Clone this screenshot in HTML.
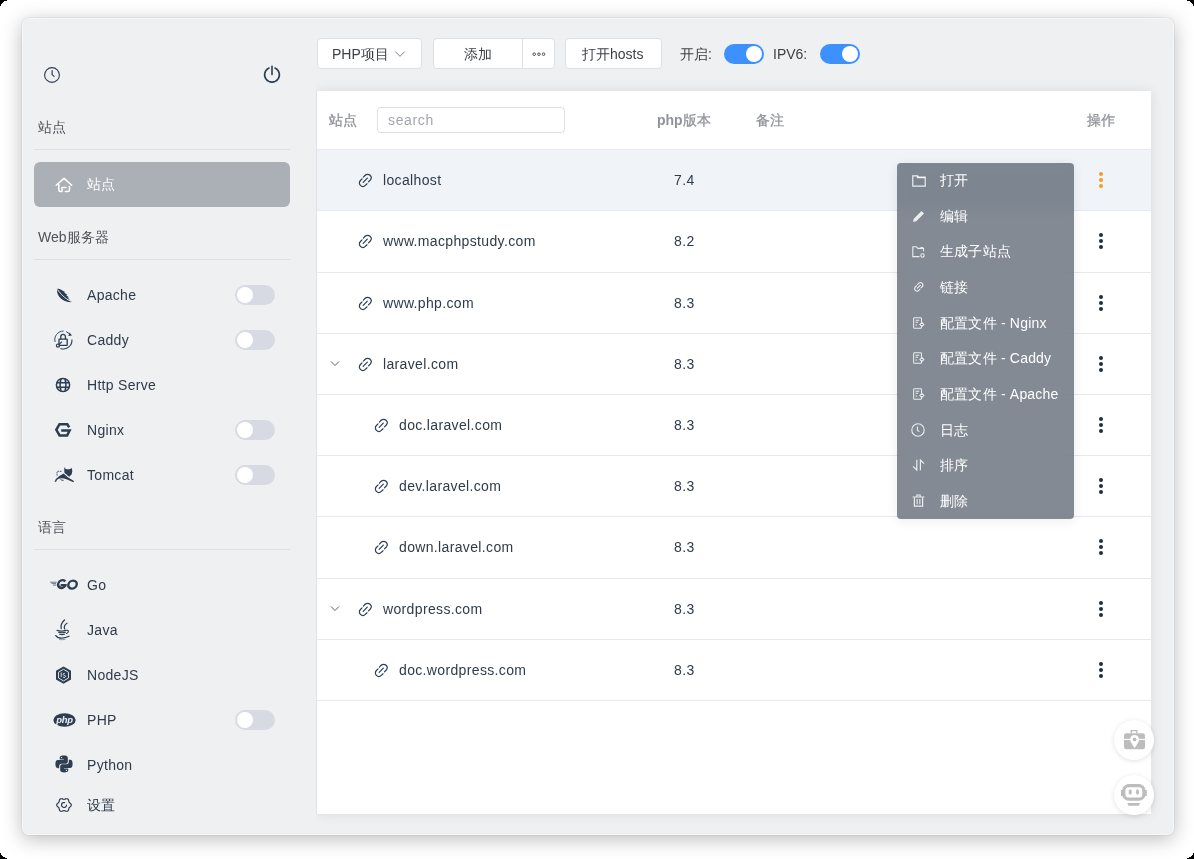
<!DOCTYPE html>
<html><head><meta charset="utf-8"><style>
*{box-sizing:border-box;margin:0;padding:0}
html,body{width:1194px;height:859px;overflow:hidden;background:#fff;font-family:"Liberation Sans",sans-serif;position:relative}
.a{position:absolute}
#root{position:absolute;left:0;top:0;width:1194px;height:859px;will-change:transform}
#bg{position:absolute;left:0;top:0;width:1194px;height:859px;background:#fff;border-radius:11px}
#win{position:absolute;left:22px;top:18px;width:1152px;height:817px;background:#eff0f2;border-radius:6.5px;
 box-shadow:0 4px 20px rgba(0,0,0,.27),0 0 1.5px rgba(0,0,0,.22),inset 0 0 0 1px rgba(255,255,255,.4)}
.t{position:absolute;white-space:nowrap;font-size:14px;line-height:17px;color:#2f3b4a}
.hd{color:#4f5259}
.it{color:#2f3b4a;letter-spacing:.3px}
.th{color:#909399}
.b{font-weight:bold}
.nm{color:#2f3b4a;letter-spacing:.35px}
.mt{color:#fff;letter-spacing:.2px}
.tog{position:absolute;width:40px;height:20px;border-radius:10px;background:#d7dae2}
.tog::after{content:"";position:absolute;left:2px;top:2px;width:16px;height:16px;border-radius:50%;background:#fff}
.tog.on{background:#3c91fe}
.tog.on::after{left:22px}
.btn{position:absolute;background:#fff;border:1px solid #dcdfe6;border-radius:4px}
#card{position:absolute;left:316px;top:91px;width:835px;height:723px;background:#fff;border-left:1px solid #dfe2e9;box-shadow:0 0 12px rgba(0,0,0,.09)}
#cardclip{position:absolute;left:296px;top:70px;width:20px;height:760px;background:#eff0f2}
.hl{position:absolute;left:317px;width:834px;height:1px;background:#e6e9f0}
#menu{position:absolute;left:897px;top:163px;width:177px;height:356px;border-radius:4px;background:rgba(55,66,80,.62);backdrop-filter:blur(6px);-webkit-backdrop-filter:blur(6px);box-shadow:0 2px 12px rgba(0,0,0,.08)}
.fab{position:absolute;width:40px;height:40px;border-radius:50%;background:#fff;box-shadow:0 1px 5px rgba(0,0,0,.12)}
</style></head><body>
<div id="root"><div id="win"></div>
<svg class="a" style="left:44px;top:67px" width="16" height="16" viewBox="0 0 16 16" fill="none" stroke="#2c3e50" stroke-width="1.1"><circle cx="8" cy="8" r="7.4"/><path d="M8.1 3.7V7.6L10.1 9.4" stroke-linecap="round" stroke-width="1.2"/></svg>
<svg class="a" style="left:262px;top:64px" width="20" height="20" viewBox="0 0 20 20" fill="none" stroke="#2c3e50" stroke-width="1.6" stroke-linecap="round"><path d="M6.99 3.99A7.4 7.4 0 1 0 13.01 3.99"/><path d="M10 2.4V10.6"/></svg>
<div class="t hd" style="left:38px;top:119px;">站点</div>
<div class="a" style="left:34px;top:149px;width:256px;height:1px;background:#dcdfe6"></div>
<div class="a" style="left:34px;top:162px;width:256px;height:45px;border-radius:6px;background:#abafb6"></div>
<svg class="a" style="left:54px;top:176px" width="20" height="18" viewBox="0 0 20 18" fill="none" stroke="#fff" stroke-width="1.5" stroke-linecap="round" stroke-linejoin="round"><path d="M2.2 9.3L10.1 2.4L17.7 9.3"/><path d="M4.8 8.2V14Q4.8 15.5 6.3 15.5H8V11.5H12"/><path d="M15.5 10.5V14Q15.5 15.5 14 15.5H11.3"/></svg>
<div class="t" style="left:87px;top:176px;color:#fff">站点</div>
<div class="t hd" style="left:38px;top:229px;">Web服务器</div>
<div class="a" style="left:34px;top:259px;width:256px;height:1px;background:#dcdfe6"></div>
<div class="a" style="left:55px;top:286px;line-height:0"><svg width="18" height="18" viewBox="0 0 18 18"><path fill="#2c3e50" d="M1.6 1.2c.3 1 .5 1.6.9 2.1C1.6 5.3 2.2 8.5 4.6 11.3c2.6 3 6.4 4.7 10.7 4.9l1.5-.6-4.1-2 2.3.2-2.6-2.3 1.6-.1-2.9-2.3 1.2-.3-3.2-2.4 1-.5L5.6 3.5C4.6 2.9 3.5 2.6 2.5 2.9 2.1 2.4 1.9 1.8 1.6 1.2z"/><path d="M2.8 3.8c2.6 4 6.8 8.6 13.6 11.8" stroke="#eff0f2" stroke-width=".9" fill="none"/></svg></div>
<div class="t it" style="left:87px;top:287px;">Apache</div>
<div class="tog" style="left:235px;top:285px"></div>
<div class="a" style="left:54px;top:330px;line-height:0"><svg width="20" height="20" viewBox="0 0 20 20" fill="none" stroke="#2c3e50" stroke-width="1.1"><path d="M1.1 12A8.6 8.6 0 0 1 9.6 1.1" stroke-width=".9"/><path d="M12.2 1.6l4.4 2.9" stroke-width="1"/><path d="M15.4 2.6l2.6 2.8-3.6.6z" fill="#2c3e50" stroke="none"/><path d="M17.9 9.5A8.6 8.6 0 0 1 6.4 18.4"/><rect x="5" y="9.2" width="8.2" height="6.2" rx=".4" stroke-width="1.3"/><path d="M6.8 9.2V6.6a2.3 2.3 0 0 1 4.6 0v2.6" stroke-width="1.3"/><circle cx="4" cy="15.6" r="1.6" stroke-width="1.2"/><path d="M5.2 14.4l2.8-2.8" stroke-width="1.1"/></svg></div>
<div class="t it" style="left:87px;top:332px;">Caddy</div>
<div class="tog" style="left:235px;top:330px"></div>
<div class="a" style="left:55px;top:377px;line-height:0"><svg width="16" height="16" viewBox="0 0 16 16" fill="none" stroke="#2c3e50" stroke-width="1.5"><circle cx="8" cy="8" r="6.6"/><path d="M1.5 5.7h13M1.5 10.3h13M6 1.6c-1.2 4-1.2 8.8 0 12.8M10 1.6c1.2 4 1.2 8.8 0 12.8"/></svg></div>
<div class="t it" style="left:87px;top:377px;">Http Serve</div>
<div class="a" style="left:54px;top:421px;line-height:0"><svg width="18" height="18" viewBox="0 0 18 18" fill="none" stroke="#2c3e50" stroke-width="2.5" stroke-linejoin="miter"><path d="M15.2 6.2L13.3 3.25H5.5L2.3 8.8L5.6 14.45H13.1L15.6 9.5H7.2"/></svg></div>
<div class="t it" style="left:87px;top:422px;">Nginx</div>
<div class="tog" style="left:235px;top:420px"></div>
<div class="a" style="left:53px;top:465px;line-height:0"><svg width="22" height="19" viewBox="0 0 22 19"><path fill="#2c3e50" d="M11.2 2.2L12.9 4Q15 4.6 17.2 3.9L18.8 3.1Q20 6.5 18.7 9.3L16 11.9L11.4 8.2Z"/><path fill="#2c3e50" d="M1.5 16.7Q2.5 13.5 6 11.2L10.5 8.6L15.2 12.4L20.9 16.1Q21 17.4 19.8 17.1L13.5 14.2Q9 12.6 5.5 13.8Q3.6 15 3.1 16.8Z"/><path d="M10.6 7.6L16.8 12.8" stroke="#eff0f2" stroke-width=".8"/><path d="M4 10.6V7.2Q4.2 6.2 5.5 6.3H9" stroke="#2c3e50" stroke-width=".9" fill="none" stroke-dasharray="1.5 .7"/><path d="M7.5 14.6Q9 15.5 10.6 15.3" stroke="#2c3e50" stroke-width=".9" fill="none"/></svg></div>
<div class="t it" style="left:87px;top:467px;">Tomcat</div>
<div class="tog" style="left:235px;top:465px"></div>
<div class="t hd" style="left:38px;top:519px;">语言</div>
<div class="a" style="left:34px;top:549px;width:256px;height:1px;background:#dcdfe6"></div>
<div class="a" style="left:48px;top:577px;line-height:0"><svg width="31" height="15" viewBox="0 0 31 15"><g fill="none" stroke="#2c3e50"><path d="M2 5.2h6.5M3.5 6.6h4.6M5 8.1h3.4" stroke-width=".9" opacity=".75"/><g transform="skewX(-8) translate(1 0)" stroke-width="2.4"><path d="M16.9 4.4A3.9 3.9 0 1 0 17.6 8.6"/><path d="M12.8 8.1h6"/><ellipse cx="24.6" cy="7.6" rx="4.2" ry="4"/></g></g></svg></div>
<div class="t it" style="left:87px;top:577px;">Go</div>
<div class="a" style="left:54px;top:619px;line-height:0"><svg width="17" height="22" viewBox="0 0 17 22" fill="none" stroke="#2c3e50" stroke-linecap="round"><path d="M10.5 1C8.3 3.3 6 5.2 7.2 9.5" stroke-width="1.3"/><path d="M13 4.2C11 5.5 9.6 7.2 10.6 10" stroke-width="1.2"/><path d="M3 11.4Q7.5 12.8 12 11.4M4.6 13.3Q7.8 14.3 11.4 13.3M5.6 15.3Q8 16 10.5 15.3" stroke-width="1.1"/><path d="M12.6 11.2C14.9 11 15 13.6 12.4 14.5" stroke-width="1.1"/><path d="M1.8 16.6Q3.8 19.4 8 19.1Q12 19 15 17.3" stroke-width="1.3"/><path d="M5.5 20.6Q8.2 21 11 20.4" stroke-width=".8" opacity=".6"/></svg></div>
<div class="t it" style="left:87px;top:622px;">Java</div>
<div class="a" style="left:55px;top:666px;line-height:0"><svg width="17" height="18" viewBox="0 0 17 18"><path fill="#2c3e50" d="M8.5.5l7.5 4.3v8.6l-7.5 4.3L1 13.4V4.8z"/><path d="M8.5 3.3l5 2.9v5.8l-5 2.9-5-2.9V6.2z" fill="none" stroke="#eff0f2" stroke-width=".9"/><path d="M6.2 6.5v4.6M8 11c.6.5 1.4.6 2 .3.9-.5.7-1.6-.3-1.8-1-.2-1.7-.6-1.5-1.4.2-.8 1.3-.9 1.8-.4" fill="none" stroke="#eff0f2" stroke-width=".9"/></svg></div>
<div class="t it" style="left:87px;top:667px;">NodeJS</div>
<div class="a" style="left:53px;top:713px;line-height:0"><svg width="23" height="14" viewBox="0 0 23 14"><ellipse cx="11.5" cy="7" rx="11.2" ry="6.8" fill="#2c3e50"/><text x="3.2" y="10" font-family="Liberation Sans" font-weight="bold" font-style="italic" font-size="9.5" fill="#eff0f2" letter-spacing="-.3">php</text></svg></div>
<div class="t it" style="left:87px;top:712px;">PHP</div>
<div class="tog" style="left:235px;top:710px"></div>
<div class="a" style="left:55px;top:755px;line-height:0"><svg width="18" height="18" viewBox="0 0 18 18"><path fill="#2c3e50" d="M8.8.6c-4.3 0-4 1.9-4 1.9v2h4.1v.6H3.1S.4 4.8.4 9.1s2.4 4.1 2.4 4.1h1.4v-2s-.1-2.4 2.3-2.4h4s2.3 0 2.3-2.2V2.9S13.2.6 8.8.6zM6.6 1.9a.7.7 0 1 1 0 1.4.7.7 0 0 1 0-1.4z"/><path fill="#2c3e50" d="M9.2 17.4c4.3 0 4-1.9 4-1.9v-2H9.1v-.6h5.8s2.7.3 2.7-4-2.4-4.1-2.4-4.1h-1.4v2s.1 2.4-2.3 2.4h-4s-2.3 0-2.3 2.2v3.7s-.4 2.3 4 2.3zm2.2-1.3a.7.7 0 1 1 0-1.4.7.7 0 0 1 0 1.4z"/></svg></div>
<div class="t it" style="left:87px;top:757px;">Python</div>
<div class="a" style="left:55px;top:797px;line-height:0"><svg width="18" height="16" viewBox="0 0 18 16" fill="none" stroke="#2c3e50" stroke-width="1.2" stroke-linejoin="round" stroke-linecap="round"><path d="M16.30 8.00 L16.18 8.60 L15.84 9.16 L15.38 9.64 L14.87 10.05 L14.43 10.43 L14.11 10.83 L13.91 11.30 L13.79 11.86 L13.67 12.48 L13.47 13.11 L13.13 13.67 L12.65 14.07 L12.05 14.27 L11.38 14.27 L10.71 14.12 L10.09 13.91 L9.52 13.73 L9.00 13.66 L8.48 13.73 L7.91 13.91 L7.29 14.12 L6.62 14.27 L5.95 14.27 L5.35 14.07 L4.87 13.67 L4.53 13.11 L4.33 12.48 L4.21 11.86 L4.09 11.30 L3.89 10.83 L3.57 10.43 L3.13 10.05 L2.62 9.64 L2.16 9.16 L1.82 8.60 L1.70 8.00 L1.82 7.40 L2.16 6.84 L2.62 6.36 L3.13 5.95 L3.57 5.57 L3.89 5.17 L4.09 4.70 L4.21 4.14 L4.33 3.52 L4.53 2.89 L4.87 2.33 L5.35 1.93 L5.95 1.73 L6.62 1.73 L7.29 1.88 L7.91 2.09 L8.48 2.27 L9.00 2.34 L9.52 2.27 L10.09 2.09 L10.71 1.88 L11.38 1.73 L12.05 1.73 L12.65 1.93 L13.13 2.33 L13.47 2.89 L13.67 3.52 L13.79 4.14 L13.91 4.70 L14.11 5.17 L14.43 5.57 L14.87 5.95 L15.38 6.36 L15.84 6.84 L16.18 7.40 L16.30 8.00Z"/><path d="M11.49 8.22A2.5 2.5 0 1 1 9.65 5.59"/></svg></div>
<div class="t it" style="left:87px;top:797px;">设置</div>
<div class="btn" style="left:317px;top:38px;width:105px;height:31px"></div>
<div class="t" style="left:332px;top:46px;color:#3c3f44">PHP项目</div>
<svg class="a" style="left:394px;top:50px" width="12" height="8" viewBox="0 0 12 8" fill="none" stroke="#7a7d84" stroke-width="1"><path d="M1.3 1.6l4.7 4.7 4.7-4.7"/></svg>
<div class="btn" style="left:433px;top:38px;width:90px;height:31px;border-radius:4px 0 0 4px"></div>
<div class="btn" style="left:522px;top:38px;width:33px;height:31px;border-radius:0 4px 4px 0"></div>
<div class="t" style="left:464px;top:46px;color:#3c3f44">添加</div>
<svg class="a" style="left:531px;top:51px" width="16" height="6" viewBox="0 0 16 6" fill="none" stroke="#3c3f44" stroke-width=".9"><circle cx="3.2" cy="3.2" r="1.3"/><circle cx="7.9" cy="3.2" r="1.3"/><circle cx="12.6" cy="3.2" r="1.3"/></svg>
<div class="btn" style="left:565px;top:38px;width:97px;height:31px"></div>
<div class="t" style="left:582px;top:46px;color:#3c3f44">打开hosts</div>
<div class="t" style="left:680px;top:46px;color:#3c3f44">开启:</div>
<div class="tog on" style="left:724px;top:44px"></div>
<div class="t" style="left:773px;top:46px;color:#3c3f44">IPV6:</div>
<div class="tog on" style="left:820px;top:44px"></div>
<div id="card"></div><div id="cardclip"></div>
<div class="t th" style="left:329px;top:112px;font-weight:400;-webkit-text-stroke:.3px #909399">站点</div>
<div class="a" style="left:377px;top:107px;width:188px;height:26px;border:1px solid #dcdfe6;border-radius:4px;background:#fff"></div>
<div class="t" style="left:388px;top:112px;color:#a3a6ad;letter-spacing:.65px">search</div>
<div class="t th" style="left:657px;top:112px;"><b>php</b><span style="font-weight:400;-webkit-text-stroke:.3px #909399">版本</span></div>
<div class="t th" style="left:756px;top:112px;font-weight:400;-webkit-text-stroke:.3px #909399">备注</div>
<div class="t th" style="left:1087px;top:112px;font-weight:400;-webkit-text-stroke:.3px #909399">操作</div>
<div class="a" style="left:317px;top:150px;width:834px;height:60px;background:#f0f4f8"></div>
<div class="a hl" style="top:149px"></div>
<div class="a" style="left:357.4px;top:171.9px;line-height:0"><svg width="16.5" height="16.5" viewBox="0 0 15 15" fill="none" stroke="#2c3e50" stroke-width="1.1" stroke-linecap="round"><path d="M5.8 4.6L7.4 3A3.18 3.18 0 0 1 11.9 7.5L10.4 9"/><path d="M4.6 6.2L3.1 7.7A3.18 3.18 0 0 0 7.6 12.2L9.1 10.7"/><path d="M5.6 9.4L9.4 5.6"/></svg></div>
<div class="t nm" style="left:383px;top:171.5px;">localhost</div>
<div class="t nm" style="left:674px;top:171.5px;">7.4</div>
<svg class="a" style="left:1098px;top:171px" width="6" height="18" viewBox="0 0 6 18" fill="#f59a23"><circle cx="3" cy="3" r="2"/><circle cx="3" cy="9" r="2"/><circle cx="3" cy="15" r="2"/></svg>
<div class="a hl" style="top:210px"></div>
<div class="a" style="left:357.4px;top:233.4px;line-height:0"><svg width="16.5" height="16.5" viewBox="0 0 15 15" fill="none" stroke="#2c3e50" stroke-width="1.1" stroke-linecap="round"><path d="M5.8 4.6L7.4 3A3.18 3.18 0 0 1 11.9 7.5L10.4 9"/><path d="M4.6 6.2L3.1 7.7A3.18 3.18 0 0 0 7.6 12.2L9.1 10.7"/><path d="M5.6 9.4L9.4 5.6"/></svg></div>
<div class="t nm" style="left:383px;top:233.0px;">www.macphpstudy.com</div>
<div class="t nm" style="left:674px;top:233.0px;">8.2</div>
<svg class="a" style="left:1098px;top:232px" width="6" height="18" viewBox="0 0 6 18" fill="#1f2d3d"><circle cx="3" cy="3" r="2"/><circle cx="3" cy="9" r="2"/><circle cx="3" cy="15" r="2"/></svg>
<div class="a hl" style="top:272px"></div>
<div class="a" style="left:357.4px;top:294.9px;line-height:0"><svg width="16.5" height="16.5" viewBox="0 0 15 15" fill="none" stroke="#2c3e50" stroke-width="1.1" stroke-linecap="round"><path d="M5.8 4.6L7.4 3A3.18 3.18 0 0 1 11.9 7.5L10.4 9"/><path d="M4.6 6.2L3.1 7.7A3.18 3.18 0 0 0 7.6 12.2L9.1 10.7"/><path d="M5.6 9.4L9.4 5.6"/></svg></div>
<div class="t nm" style="left:383px;top:294.5px;">www.php.com</div>
<div class="t nm" style="left:674px;top:294.5px;">8.3</div>
<svg class="a" style="left:1098px;top:294px" width="6" height="18" viewBox="0 0 6 18" fill="#1f2d3d"><circle cx="3" cy="3" r="2"/><circle cx="3" cy="9" r="2"/><circle cx="3" cy="15" r="2"/></svg>
<div class="a hl" style="top:333px"></div>
<svg class="a" style="left:330px;top:360.0px" width="10" height="7" viewBox="0 0 10 7" fill="none" stroke="#606266" stroke-width="1"><path d="M1 1.5l4 4 4-4"/></svg>
<div class="a" style="left:357.4px;top:355.9px;line-height:0"><svg width="16.5" height="16.5" viewBox="0 0 15 15" fill="none" stroke="#2c3e50" stroke-width="1.1" stroke-linecap="round"><path d="M5.8 4.6L7.4 3A3.18 3.18 0 0 1 11.9 7.5L10.4 9"/><path d="M4.6 6.2L3.1 7.7A3.18 3.18 0 0 0 7.6 12.2L9.1 10.7"/><path d="M5.6 9.4L9.4 5.6"/></svg></div>
<div class="t nm" style="left:383px;top:355.5px;">laravel.com</div>
<div class="t nm" style="left:674px;top:355.5px;">8.3</div>
<svg class="a" style="left:1098px;top:355px" width="6" height="18" viewBox="0 0 6 18" fill="#1f2d3d"><circle cx="3" cy="3" r="2"/><circle cx="3" cy="9" r="2"/><circle cx="3" cy="15" r="2"/></svg>
<div class="a hl" style="top:394px"></div>
<div class="a" style="left:373.4px;top:416.9px;line-height:0"><svg width="16.5" height="16.5" viewBox="0 0 15 15" fill="none" stroke="#2c3e50" stroke-width="1.1" stroke-linecap="round"><path d="M5.8 4.6L7.4 3A3.18 3.18 0 0 1 11.9 7.5L10.4 9"/><path d="M4.6 6.2L3.1 7.7A3.18 3.18 0 0 0 7.6 12.2L9.1 10.7"/><path d="M5.6 9.4L9.4 5.6"/></svg></div>
<div class="t nm" style="left:399px;top:416.5px;">doc.laravel.com</div>
<div class="t nm" style="left:674px;top:416.5px;">8.3</div>
<svg class="a" style="left:1098px;top:416px" width="6" height="18" viewBox="0 0 6 18" fill="#1f2d3d"><circle cx="3" cy="3" r="2"/><circle cx="3" cy="9" r="2"/><circle cx="3" cy="15" r="2"/></svg>
<div class="a hl" style="top:455px"></div>
<div class="a" style="left:373.4px;top:477.9px;line-height:0"><svg width="16.5" height="16.5" viewBox="0 0 15 15" fill="none" stroke="#2c3e50" stroke-width="1.1" stroke-linecap="round"><path d="M5.8 4.6L7.4 3A3.18 3.18 0 0 1 11.9 7.5L10.4 9"/><path d="M4.6 6.2L3.1 7.7A3.18 3.18 0 0 0 7.6 12.2L9.1 10.7"/><path d="M5.6 9.4L9.4 5.6"/></svg></div>
<div class="t nm" style="left:399px;top:477.5px;">dev.laravel.com</div>
<div class="t nm" style="left:674px;top:477.5px;">8.3</div>
<svg class="a" style="left:1098px;top:477px" width="6" height="18" viewBox="0 0 6 18" fill="#1f2d3d"><circle cx="3" cy="3" r="2"/><circle cx="3" cy="9" r="2"/><circle cx="3" cy="15" r="2"/></svg>
<div class="a hl" style="top:516px"></div>
<div class="a" style="left:373.4px;top:539.4px;line-height:0"><svg width="16.5" height="16.5" viewBox="0 0 15 15" fill="none" stroke="#2c3e50" stroke-width="1.1" stroke-linecap="round"><path d="M5.8 4.6L7.4 3A3.18 3.18 0 0 1 11.9 7.5L10.4 9"/><path d="M4.6 6.2L3.1 7.7A3.18 3.18 0 0 0 7.6 12.2L9.1 10.7"/><path d="M5.6 9.4L9.4 5.6"/></svg></div>
<div class="t nm" style="left:399px;top:539.0px;">down.laravel.com</div>
<div class="t nm" style="left:674px;top:539.0px;">8.3</div>
<svg class="a" style="left:1098px;top:538px" width="6" height="18" viewBox="0 0 6 18" fill="#1f2d3d"><circle cx="3" cy="3" r="2"/><circle cx="3" cy="9" r="2"/><circle cx="3" cy="15" r="2"/></svg>
<div class="a hl" style="top:578px"></div>
<svg class="a" style="left:330px;top:605.0px" width="10" height="7" viewBox="0 0 10 7" fill="none" stroke="#606266" stroke-width="1"><path d="M1 1.5l4 4 4-4"/></svg>
<div class="a" style="left:357.4px;top:600.9px;line-height:0"><svg width="16.5" height="16.5" viewBox="0 0 15 15" fill="none" stroke="#2c3e50" stroke-width="1.1" stroke-linecap="round"><path d="M5.8 4.6L7.4 3A3.18 3.18 0 0 1 11.9 7.5L10.4 9"/><path d="M4.6 6.2L3.1 7.7A3.18 3.18 0 0 0 7.6 12.2L9.1 10.7"/><path d="M5.6 9.4L9.4 5.6"/></svg></div>
<div class="t nm" style="left:383px;top:600.5px;">wordpress.com</div>
<div class="t nm" style="left:674px;top:600.5px;">8.3</div>
<svg class="a" style="left:1098px;top:600px" width="6" height="18" viewBox="0 0 6 18" fill="#1f2d3d"><circle cx="3" cy="3" r="2"/><circle cx="3" cy="9" r="2"/><circle cx="3" cy="15" r="2"/></svg>
<div class="a hl" style="top:639px"></div>
<div class="a" style="left:373.4px;top:661.9px;line-height:0"><svg width="16.5" height="16.5" viewBox="0 0 15 15" fill="none" stroke="#2c3e50" stroke-width="1.1" stroke-linecap="round"><path d="M5.8 4.6L7.4 3A3.18 3.18 0 0 1 11.9 7.5L10.4 9"/><path d="M4.6 6.2L3.1 7.7A3.18 3.18 0 0 0 7.6 12.2L9.1 10.7"/><path d="M5.6 9.4L9.4 5.6"/></svg></div>
<div class="t nm" style="left:399px;top:661.5px;">doc.wordpress.com</div>
<div class="t nm" style="left:674px;top:661.5px;">8.3</div>
<svg class="a" style="left:1098px;top:661px" width="6" height="18" viewBox="0 0 6 18" fill="#1f2d3d"><circle cx="3" cy="3" r="2"/><circle cx="3" cy="9" r="2"/><circle cx="3" cy="15" r="2"/></svg>
<div class="a hl" style="top:700px"></div>
<div class="fab" style="left:1114px;top:720px"></div>
<svg class="a" style="left:1123px;top:729px" width="23" height="22" viewBox="0 0 23 22"><path fill="#bdbdbd" d="M7.5 1h7v3.4h-1.4V2.2H8.9v2.2H7.5z"/><rect x="1" y="4.2" width="21" height="16.1" rx="2.2" fill="#bdbdbd"/><path fill="#fff" d="M1 9.9h21v1.1H1z"/><path fill="#fff" d="M11.6 5.9a4.5 4.5 0 0 1 4.5 4.5c0 2.6-4.5 8.6-4.5 8.6s-4.5-6-4.5-8.6a4.5 4.5 0 0 1 4.5-4.5z"/><circle cx="11.6" cy="10.4" r="1.9" fill="#bdbdbd"/></svg>
<div class="fab" style="left:1114px;top:775px"></div>
<svg class="a" style="left:1120px;top:782px" width="28" height="26" viewBox="0 0 28 26"><rect x="3.8" y="3.6" width="20.1" height="13.6" rx="5" fill="none" stroke="#bdbdbd" stroke-width="3.2"/><rect x="1" y="8" width="2.6" height="6" fill="#bdbdbd"/><rect x="24.2" y="8" width="2.6" height="6" fill="#bdbdbd"/><ellipse cx="10.2" cy="10" rx="1.6" ry="2.75" fill="#bdbdbd"/><ellipse cx="17.5" cy="10" rx="1.6" ry="2.75" fill="#bdbdbd"/><path fill="#bdbdbd" d="M7.3 21H20L18.8 23.8H8.5Z"/></svg>
<div id="menu"></div>
<div class="a" style="left:912px;top:175px;line-height:0"><svg width="14" height="12" viewBox="0 0 14 12" fill="none" stroke="rgba(255,255,255,.85)" stroke-width="1.2"><path d="M.8.8h4.6l1.4 1.4h6.4v9H.8z"/><path d="M5.4.8v1.8h7.8"/></svg></div>
<div class="t mt" style="left:940px;top:171.5px;">打开</div>
<div class="a" style="left:912px;top:210px;line-height:0"><svg width="13" height="13" viewBox="0 0 13 13"><path d="M9.6 1l2.4 2.4-7.8 7.8-3.2.8.8-3.2z" fill="rgba(255,255,255,.85)"/></svg></div>
<div class="t mt" style="left:940px;top:207.5px;">编辑</div>
<div class="a" style="left:912px;top:246px;line-height:0"><svg width="14" height="13" viewBox="0 0 14 13" fill="none" stroke="rgba(255,255,255,.85)" stroke-width="1.1"><path d="M7.5 10.6H.8V.8h3.6l1.5 1.6h5.6v2.8M8.5 1.6h2.6"/><circle cx="10.5" cy="9.5" r="1.7"/></svg></div>
<div class="t mt" style="left:940px;top:243.0px;">生成子站点</div>
<div class="a" style="left:913px;top:281px;line-height:0"><svg width="11.5" height="11.5" viewBox="0 0 15 15" fill="none" stroke="rgba(255,255,255,.85)" stroke-width="1.4" stroke-linecap="round"><path d="M5.8 4.6L7.4 3A3.18 3.18 0 0 1 11.9 7.5L10.4 9"/><path d="M4.6 6.2L3.1 7.7A3.18 3.18 0 0 0 7.6 12.2L9.1 10.7"/><path d="M5.6 9.4L9.4 5.6"/></svg></div>
<div class="t mt" style="left:940px;top:278.5px;">链接</div>
<div class="a" style="left:913px;top:317px;line-height:0"><svg width="12" height="12" viewBox="0 0 13 13" fill="none" stroke="rgba(255,255,255,.85)" stroke-width="1.1"><path d="M9.2 5.5V1.6a.9.9 0 0 0-.9-.9H1.6a.9.9 0 0 0-.9.9v9.8a.9.9 0 0 0 .9.9h6.7a.9.9 0 0 0 .9-.9V10"/><path d="M2.8 3.6h4M2.8 5.8h2.6M2.8 8.6h1.6"/><path d="M9.6 5.8l2.2 2.2-2.2 2.2-2.2-2.2z"/></svg></div>
<div class="t mt" style="left:940px;top:314.5px;">配置文件 - Nginx</div>
<div class="a" style="left:913px;top:352px;line-height:0"><svg width="12" height="12" viewBox="0 0 13 13" fill="none" stroke="rgba(255,255,255,.85)" stroke-width="1.1"><path d="M9.2 5.5V1.6a.9.9 0 0 0-.9-.9H1.6a.9.9 0 0 0-.9.9v9.8a.9.9 0 0 0 .9.9h6.7a.9.9 0 0 0 .9-.9V10"/><path d="M2.8 3.6h4M2.8 5.8h2.6M2.8 8.6h1.6"/><path d="M9.6 5.8l2.2 2.2-2.2 2.2-2.2-2.2z"/></svg></div>
<div class="t mt" style="left:940px;top:350.0px;">配置文件 - Caddy</div>
<div class="a" style="left:913px;top:388px;line-height:0"><svg width="12" height="12" viewBox="0 0 13 13" fill="none" stroke="rgba(255,255,255,.85)" stroke-width="1.1"><path d="M9.2 5.5V1.6a.9.9 0 0 0-.9-.9H1.6a.9.9 0 0 0-.9.9v9.8a.9.9 0 0 0 .9.9h6.7a.9.9 0 0 0 .9-.9V10"/><path d="M2.8 3.6h4M2.8 5.8h2.6M2.8 8.6h1.6"/><path d="M9.6 5.8l2.2 2.2-2.2 2.2-2.2-2.2z"/></svg></div>
<div class="t mt" style="left:940px;top:385.5px;">配置文件 - Apache</div>
<div class="a" style="left:911px;top:423px;line-height:0"><svg width="14" height="14" viewBox="0 0 14 14" fill="none" stroke="rgba(255,255,255,.85)" stroke-width="1.1"><circle cx="7" cy="7" r="6.2"/><path d="M6.4 3.6v3.6l2 1.4"/></svg></div>
<div class="t mt" style="left:940px;top:421.5px;">日志</div>
<div class="a" style="left:912px;top:459px;line-height:0"><svg width="13" height="12" viewBox="0 0 13 12" fill="none" stroke="rgba(255,255,255,.85)" stroke-width="1.2"><path d="M4.8 .8v10.2L1 7.4M8.4 11.2V1L12 4.6"/></svg></div>
<div class="t mt" style="left:940px;top:456.5px;">排序</div>
<div class="a" style="left:912px;top:494px;line-height:0"><svg width="13" height="13" viewBox="0 0 13 13" fill="rgba(255,255,255,.85)"><path d="M.6 2.4h11.8v1.2H.6zM4.3.5h4.4v1.9H7.6V1.5H5.4v.9H4.3z"/><path d="M1.8 3.6h1.2v7.9h7V3.6h1.2v9.1H1.8z"/><path d="M4.6 5h1.1v5.2H4.6zM7.3 5h1.1v5.2H7.3z"/></svg></div>
<div class="t mt" style="left:940px;top:492.5px;">删除</div>
<div class="a" style="left:0;top:0px;width:7px;height:1px;background:#000"></div>
<div class="a" style="left:1187px;top:0px;width:7px;height:1px;background:#000"></div>
<div class="a" style="left:0;top:1px;width:4px;height:1px;background:#000"></div>
<div class="a" style="left:1190px;top:1px;width:4px;height:1px;background:#000"></div>
<div class="a" style="left:0;top:2px;width:3px;height:1px;background:#000"></div>
<div class="a" style="left:1191px;top:2px;width:3px;height:1px;background:#000"></div>
<div class="a" style="left:0;top:3px;width:2px;height:1px;background:#000"></div>
<div class="a" style="left:1192px;top:3px;width:2px;height:1px;background:#000"></div>
<div class="a" style="left:0;top:4px;width:1px;height:1px;background:#000"></div>
<div class="a" style="left:1193px;top:4px;width:1px;height:1px;background:#000"></div>
<div class="a" style="left:0;top:5px;width:1px;height:1px;background:#000"></div>
<div class="a" style="left:1193px;top:5px;width:1px;height:1px;background:#000"></div>
<div class="a" style="left:0;top:858px;width:7px;height:1px;background:#000"></div>
<div class="a" style="left:1187px;top:858px;width:7px;height:1px;background:#000"></div>
<div class="a" style="left:0;top:857px;width:5px;height:1px;background:#000"></div>
<div class="a" style="left:1189px;top:857px;width:5px;height:1px;background:#000"></div>
<div class="a" style="left:0;top:856px;width:3px;height:1px;background:#000"></div>
<div class="a" style="left:1191px;top:856px;width:3px;height:1px;background:#000"></div>
<div class="a" style="left:0;top:855px;width:2px;height:1px;background:#000"></div>
<div class="a" style="left:1192px;top:855px;width:2px;height:1px;background:#000"></div>
<div class="a" style="left:0;top:854px;width:1px;height:1px;background:#000"></div>
<div class="a" style="left:1193px;top:854px;width:1px;height:1px;background:#000"></div>
<div class="a" style="left:0;top:853px;width:1px;height:1px;background:#000"></div>
<div class="a" style="left:1193px;top:853px;width:1px;height:1px;background:#000"></div></div>
</body></html>
